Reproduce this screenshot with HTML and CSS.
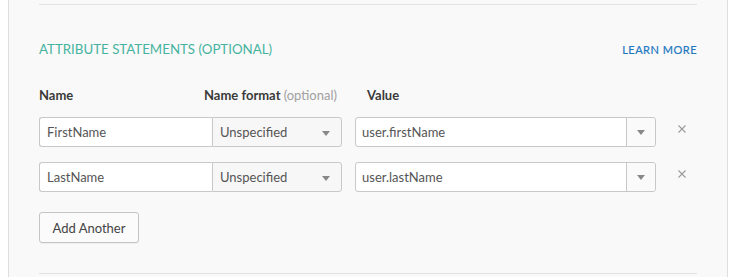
FILE: index.html
```html
<!DOCTYPE html>
<html lang="en">
<head>
    <meta charset="UTF-8">
    <title>Attribute Statements</title>
    <link rel="stylesheet" href="styles.css">
</head>
<body>
    <div class="panel">
        <div class="divider first"></div>

        <div class="section-head">
            <h2 class="section-title">ATTRIBUTE STATEMENTS (OPTIONAL)</h2>
            <a class="learn-more" href="#">LEARN MORE</a>
        </div>

        <div class="labels">
            <div class="label">Name</div>
            <div class="label">Name format <span class="hint">(optional)</span></div>
            <div class="label">Value</div>
        </div>

        <div class="attr-row">
            <div class="name-input">FirstName</div>
            <div class="format-select">Unspecified<span class="caret"></span></div>
            <div class="value-combo">
                <div class="value-text">user.firstName</div>
                <div class="combo-btn"><span class="caret"></span></div>
            </div>
            <svg class="remove" width="8" height="8" viewBox="0 0 8 8"><path d="M0.5 0.5L7.5 7.5M7.5 0.5L0.5 7.5" stroke="#9a9a9a" stroke-width="1.1"/></svg>
        </div>

        <div class="attr-row">
            <div class="name-input">LastName</div>
            <div class="format-select">Unspecified<span class="caret"></span></div>
            <div class="value-combo">
                <div class="value-text">user.lastName</div>
                <div class="combo-btn"><span class="caret"></span></div>
            </div>
            <svg class="remove" width="8" height="8" viewBox="0 0 8 8"><path d="M0.5 0.5L7.5 7.5M7.5 0.5L0.5 7.5" stroke="#9a9a9a" stroke-width="1.1"/></svg>
        </div>

        <button class="add-btn">Add Another</button>

        <div class="divider last"></div>
    </div>
</body>
</html>
```

FILE: styles.css
```css
body {
    margin: 0;
    background: #fff;
    font-family: Lato, "Open Sans", sans-serif;
    font-size: 13px;
    color: #333;
}
.panel {
    margin-left: 8px;
    width: 720px;
    height: 277px;
    box-sizing: border-box;
    border-left: 1px solid #dedede;
    border-right: 1px solid #dedede;
    background: #f9f9f9;
    padding: 4px 30px 0 30px;
}
.divider {
    height: 1px;
    background: #e3e3e3;
}
.divider.last {
    margin-top: 30px;
}
.section-head {
    display: flex;
    justify-content: space-between;
    align-items: baseline;
    margin-top: 35px;
    height: 18px;
}
.section-title {
    margin: 0;
    font-size: 13.3px;
    font-weight: 400;
    line-height: 18px;
    color: #45b3a0;
}
.learn-more {
    font-size: 11px;
    font-weight: 400;
    letter-spacing: 0.5px;
    color: #1f78c0;
    text-decoration: none;
    -webkit-text-stroke: 0.2px #1f78c0;
}
.labels {
    display: grid;
    grid-template-columns: 165px 163px auto;
    margin-top: 28px;
    line-height: 18px;
}
.label {
    font-size: 13px;
    font-weight: 700;
    color: #3a3a3a;
}
.hint {
    font-weight: 400;
    color: #a0a0a0;
}
.attr-row {
    display: flex;
    align-items: center;
    height: 30px;
    margin-top: 13px;
}
.attr-row + .attr-row {
    margin-top: 15px;
}
.name-input,
.format-select,
.value-combo {
    box-sizing: border-box;
    height: 30px;
    border: 1px solid #c8c8c8;
    display: flex;
    align-items: center;
    color: #555;
}
.name-input {
    width: 173px;
    padding-left: 7px;
    background: #fff;
    border-right: none;
    border-radius: 3px 0 0 3px;
}
.format-select {
    position: relative;
    width: 130px;
    padding-left: 7px;
    background: #f7f7f7;
    border-radius: 0 3px 3px 0;
}
.format-select .caret {
    position: absolute;
    right: 11px;
    top: 13px;
}
.caret {
    width: 0;
    height: 0;
    border-left: 4px solid transparent;
    border-right: 4px solid transparent;
    border-top: 5px solid #888;
}
.value-combo {
    width: 301px;
    margin-left: 13px;
    background: #fff;
    border-radius: 3px;
}
.value-text {
    flex: 1;
    padding-left: 6px;
}
.combo-btn {
    width: 29px;
    height: 28px;
    box-sizing: border-box;
    border-left: 1px solid #c8c8c8;
    background: #fafafa;
    border-radius: 0 3px 3px 0;
    display: flex;
    align-items: center;
    justify-content: center;
}
.remove {
    margin-left: 22px;
    margin-top: -6px;
}
.add-btn {
    display: block;
    margin-top: 20px;
    width: 100px;
    height: 31px;
    border: 1px solid #c4c4c4;
    border-radius: 3px;
    background: #fbfbfb;
    font-family: inherit;
    font-size: 13px;
    color: #444;
    box-shadow: 0 1px 0 rgba(0,0,0,0.04);
}
```
